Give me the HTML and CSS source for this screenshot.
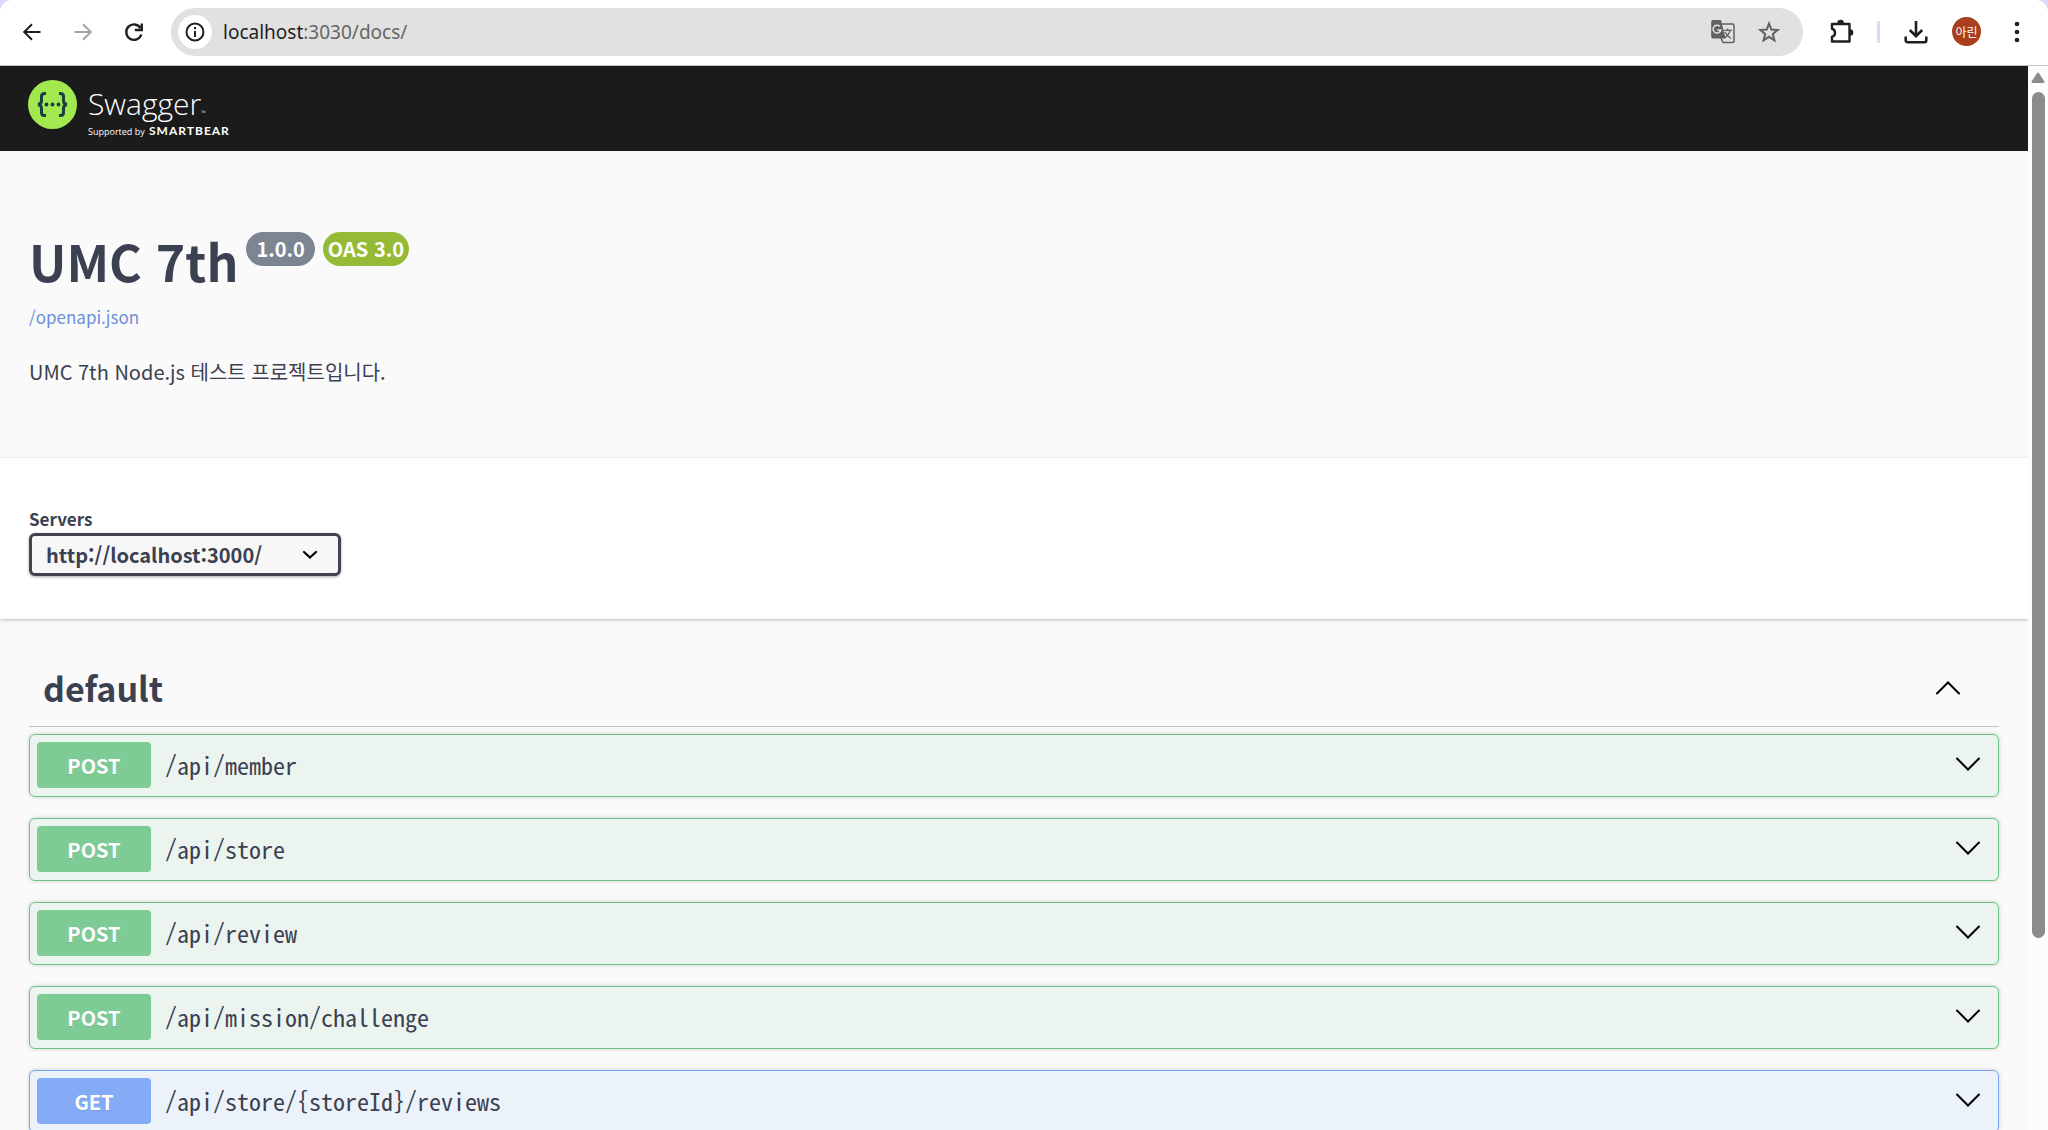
FILE: index.html
```html
<!DOCTYPE html>
<html lang="ko">
<head>
<meta charset="utf-8">
<title>Swagger UI</title>
<link rel="stylesheet" href="styles.css">
</head>
<body>
<header class="browser-bar">
  <nav class="nav-buttons" aria-label="Browser navigation">
    <button class="icon-button" aria-label="Back"><svg width="32" height="32" viewBox="0 0 32 32" fill="none" stroke="#1f1f1f" stroke-width="2"><path d="M24.500 16H8.500M16 8.200L8.200 16l7.800 7.800"/></svg></button>
    <button class="icon-button" aria-label="Forward"><svg width="32" height="32" viewBox="0 0 32 32" fill="none" stroke="#a5a5a5" stroke-width="2"><path d="M7.500 16h16M16 8.200l7.800 7.800-7.800 7.800"/></svg></button>
    <button class="icon-button" aria-label="Reload"><svg width="32" height="32" viewBox="0 0 32 32" fill="none" stroke="#1f1f1f" stroke-width="2.400"><path d="M23.300 18.500A7.700 7.700 0 1 1 22.500 12M23.800 7.500v6.500h-7"/></svg></button>
  </nav>
  <div class="address">
    <button class="site-info" aria-label="Site information"><svg width="20" height="20" viewBox="0 0 20 20" fill="none" stroke="#1f1f1f" stroke-width="2"><circle cx="10" cy="10" r="8.500"/><path d="M10 9v6M10 5v2.200"/></svg></button>
    <a class="url" href="#"><span class="host">localhost</span>:3030/docs/</a>
    <button class="icon-button" aria-label="Translate"><svg width="26" height="26" viewBox="0 0 26 26"><path d="M12 5h10.500a1.500 1.500 0 0 1 1.500 1.500V22a1.500 1.500 0 0 1-1.500 1.500H13L11 19" fill="none" stroke="#606060" stroke-width="1.500"/><path d="M3 1h8l4.500 18.500H3A1.800 1.800 0 0 1 1.200 17.700V2.800A1.800 1.800 0 0 1 3 1z" fill="#606060"/><path d="M9.800 7.400A3.900 3.900 0 1 0 10.800 11H7.200" fill="none" stroke="#e1e1e1" stroke-width="1.600"/><path d="M13.500 11.300H22M17.700 9.500v1.800M20 11.500c-.5 3-3.500 6.500-6 7.500M15 13c1 2.500 3.500 5 6 6.500" fill="none" stroke="#606060" stroke-width="1.300"/></svg></button>
    <button class="icon-button" aria-label="Bookmark"><svg width="24" height="24" viewBox="0 0 24 24" fill="none" stroke="#606060" stroke-width="2"><path d="M12 3.500l2.300 6 6.400.5-4.900 4 1.600 6.300L12 16.800l-5.400 3.500L8.200 14l-4.900-4 6.400-.5z"/></svg></button>
  </div>
  <div class="tools">
    <button class="icon-button" aria-label="Extensions"><svg width="28" height="28" viewBox="0 0 28 28"><path d="M5 6h17.500v17.500H5v-4.700c4-.8 4-7.300 0-8.100z" fill="none" stroke="#1f1f1f" stroke-width="2.400" stroke-linejoin="round"/><path d="M10.300 5a3.300 3.300 0 0 1 6.600 0zM23 11.200a3.300 3.300 0 0 1 0 6.600z" fill="#1f1f1f"/></svg></button>
    <span class="divider"></span>
    <button class="icon-button" aria-label="Downloads"><svg width="28" height="28" viewBox="0 0 28 28" fill="none" stroke="#1f1f1f" stroke-width="2.600"><path d="M14 3v15M7.800 12l6.200 6.200 6.200-6.200M3.700 18.500v3.700a2 2 0 0 0 2 2h16.600a2 2 0 0 0 2-2v-3.700"/></svg></button>
    <button class="avatar" aria-label="Profile">아린</button>
    <button class="icon-button" aria-label="Menu"><svg width="28" height="28" viewBox="0 0 28 28" fill="#1f1f1f"><circle cx="14" cy="6" r="2.300"/><circle cx="14" cy="14" r="2.300"/><circle cx="14" cy="22" r="2.300"/></svg></button>
  </div>
</header>
<div class="viewport">
  <main class="page">
    <div class="topbar">
      <a class="logo" href="#" aria-label="Swagger">
        <svg width="49" height="49" viewBox="0 0 49 49"><circle cx="24.500" cy="24.500" r="24.500" fill="#a1e94f"/><g fill="none" stroke="#1b3c42" stroke-width="3"><path d="M18 13.500h-1.500c-2 0-3 1-3 3v4c0 2.500-1 3.700-3.500 4 2.500.3 3.500 1.500 3.500 4v4c0 2 1 3 3 3H18M31 13.500h1.500c2 0 3 1 3 3v4c0 2.500 1 3.700 3.500 4-2.500.3-3.500 1.500-3.500 4v4c0 2-1 3-3 3H31"/></g><g fill="#1b3c42"><circle cx="18.500" cy="24.500" r="1.900"/><circle cx="24.500" cy="24.500" r="1.900"/><circle cx="30.500" cy="24.500" r="1.900"/></g></svg>
        <span class="wordmark">
          <span class="brand">Swagger<span class="tm">™</span></span>
          <span class="support">Supported by <b>SMARTBEAR</b></span>
        </span>
      </a>
    </div>
    <section class="info">
      <div class="title-row">
        <h1>UMC 7th</h1>
        <span class="badge version">1.0.0</span>
        <span class="badge oas">OAS 3.0</span>
      </div>
      <a class="spec-link" href="#">/openapi.json</a>
      <p class="description">UMC 7th Node.js 테스트 프로젝트입니다.</p>
    </section>
    <section class="servers">
      <label for="server">Servers</label>
      <div class="select-box">
        <select id="server"><option>http://localhost:3000/</option></select>
        <svg class="select-arrow" width="16" height="10" viewBox="0 0 16 10" fill="none" stroke="#000" stroke-width="2.200" stroke-linecap="round"><path d="M2 2l6 5.500L14 2"/></svg>
      </div>
    </section>
    <section class="operations">
      <div class="tag">
        <h2>default</h2>
        <button class="icon-button" aria-label="Collapse"><svg width="26" height="16" viewBox="0 0 26 16" class="chevron"><path d="M2 13.500L13 2.500l11 11"/></svg></button>
      </div>
      <ul class="list">
        <li class="op post"><button class="method">POST</button><a class="path" href="#">/api/member</a><button class="icon-button" aria-label="Expand"><svg width="26" height="16" viewBox="0 0 26 16" class="chevron"><path d="M2 1.500l11 11 11-11"/></svg></button></li>
        <li class="op post"><button class="method">POST</button><a class="path" href="#">/api/store</a><button class="icon-button" aria-label="Expand"><svg width="26" height="16" viewBox="0 0 26 16" class="chevron"><path d="M2 1.500l11 11 11-11"/></svg></button></li>
        <li class="op post"><button class="method">POST</button><a class="path" href="#">/api/review</a><button class="icon-button" aria-label="Expand"><svg width="26" height="16" viewBox="0 0 26 16" class="chevron"><path d="M2 1.500l11 11 11-11"/></svg></button></li>
        <li class="op post"><button class="method">POST</button><a class="path" href="#">/api/mission/challenge</a><button class="icon-button" aria-label="Expand"><svg width="26" height="16" viewBox="0 0 26 16" class="chevron"><path d="M2 1.500l11 11 11-11"/></svg></button></li>
        <li class="op get"><button class="method">GET</button><a class="path" href="#">/api/store/{storeId}/reviews</a><button class="icon-button" aria-label="Expand"><svg width="26" height="16" viewBox="0 0 26 16" class="chevron"><path d="M2 1.500l11 11 11-11"/></svg></button></li>
      </ul>
    </section>
  </main>
  <div class="scrollbar" aria-hidden="true">
    <svg width="14" height="12" viewBox="0 0 14 12" fill="#8b8b8b"><path d="M7 1.500L12.500 10h-11z" stroke="#8b8b8b" stroke-width="2" stroke-linejoin="round"/></svg>
    <div class="thumb"></div>
  </div>
</div>
</body>
</html>
```
FILE: styles.css
```css
* {
  box-sizing: border-box;
}

body {
  margin: 0;
  height: 100vh;
  display: flex;
  flex-direction: column;
  overflow: hidden;
  background: #dcd9fb;
  color: #3b4151;
  font-family: "Noto Sans CJK KR", sans-serif;
}

button {
  padding: 0;
  border: 0;
  background: none;
  font-family: inherit;
}

a {
  color: inherit;
  text-decoration: none;
}

svg {
  display: block;
}

.icon-button {
  display: flex;
}

/* Browser bar */
.browser-bar {
  display: flex;
  align-items: center;
  flex: none;
  height: 66px;
  padding: 0 17px 2px 16px;
  background: #fff;
  border-bottom: 1px solid #c4c4c4;
  border-radius: 12px 12px 0 0;
}

.nav-buttons {
  display: flex;
  gap: 19px;
  margin-right: 21px;
}

.address {
  display: flex;
  flex: 1;
  align-items: center;
  height: 48px;
  padding: 0 22px 0 7px;
  border-radius: 24px;
  background: #e1e1e1;
  gap: 21px;
}

.site-info {
  display: flex;
  align-items: center;
  justify-content: center;
  width: 34px;
  height: 34px;
  border-radius: 50%;
  background: #fff;
}

.url {
  flex: 1;
  margin-left: -10px;
  font: 19px "Noto Sans", sans-serif;
  color: #666;
}

.host {
  color: #1f1f1f;
}

.tools {
  display: flex;
  align-items: center;
  margin-left: 24px;
  gap: 22px;
}

.divider {
  width: 3px;
  height: 22px;
  background: #dcd9fb;
}

.avatar {
  width: 29px;
  height: 29px;
  border-radius: 50%;
  background: #a93f1e;
  color: #fff;
  font-size: 12px;
  line-height: 29px;
}

/* Page and scrollbar */
.viewport {
  display: flex;
  flex: 1;
  min-height: 0;
}

.page {
  flex: 1;
  min-width: 0;
  overflow: hidden;
  background: #fafafa;
}

.scrollbar {
  display: flex;
  flex-direction: column;
  align-items: center;
  width: 20px;
  padding-top: 6px;
  gap: 8px;
  background: #fcfcfc;
}

.thumb {
  width: 13px;
  height: 80%;
  border-radius: 7px;
  background: #8b8b8b;
}

/* Top bar */
.topbar {
  height: 85px;
  padding: 14px 28px;
  background: #1b1b1b;
}

.logo {
  display: flex;
  gap: 11px;
  color: #fff;
}

.wordmark {
  display: flex;
  flex-direction: column;
  font-family: "Open Sans", sans-serif;
}

.brand {
  height: 44px;
  font-size: 30px;
  font-weight: 300;
  line-height: 48px;
}

.tm {
  font-size: 6px;
}

.support {
  height: 14px;
  font-size: 9px;
  line-height: 14px;
}

.support b {
  margin-left: 2px;
  font: 700 12px/14px Lato, sans-serif;
  letter-spacing: 1px;
}

/* API information */
.info {
  padding: 72px 29px 71px;
}

.title-row {
  display: flex;
  gap: 8px;
}

h1 {
  margin: 0;
  font-size: 50px;
  line-height: 74px;
}

.badge {
  height: 34px;
  margin-top: 9px;
  border-radius: 17px;
  color: #fff;
  font-size: 20px;
  font-weight: 700;
  line-height: 34px;
}

.version {
  padding: 0 10px;
  background: #7d8492;
}

.oas {
  padding: 0 5px;
  background: #95bb36;
}

.spec-link {
  display: block;
  margin-top: 7px;
  color: #6b8fd9;
  font-size: 17px;
  line-height: 26px;
}

.description {
  margin: 27px 0 0;
  font-size: 20px;
  line-height: 30px;
}

/* Servers */
.servers {
  padding: 47px 29px 43px;
  background: #fff;
  box-shadow: 0 1px 3px rgba(0, 0, 0, 0.25);
}

.servers label {
  display: block;
  font-size: 17px;
  font-weight: 700;
  line-height: 28px;
}

.select-box {
  display: grid;
  align-items: center;
  width: 312px;
}

.select-box select {
  grid-area: 1 / 1;
  width: 100%;
  height: 43px;
  padding: 0 14px;
  appearance: none;
  border: 3px solid #41444e;
  border-radius: 6px;
  background: #f7f7f7;
  box-shadow: 0 1px 3px rgba(0, 0, 0, 0.35);
  color: #3b4151;
  font: 700 20px "Noto Sans CJK KR", sans-serif;
}

.select-arrow {
  grid-area: 1 / 1;
  justify-self: end;
  margin-right: 23px;
  pointer-events: none;
}

/* Operations */
.operations {
  padding: 32px 29px;
}

.tag {
  display: flex;
  align-items: center;
  justify-content: space-between;
  height: 76px;
  padding: 0 38px 2px 14px;
  border-bottom: 1px solid #c0c3c6;
}

h2 {
  margin: 0;
  font-size: 34px;
  line-height: 52px;
}

.chevron {
  fill: none;
  stroke: #000;
  stroke-width: 2;
  stroke-linecap: round;
}

.list {
  display: flex;
  flex-direction: column;
  gap: 21px;
  margin: 7px 0 0;
  padding: 0;
  list-style: none;
}

.op {
  display: flex;
  align-items: center;
  height: 63px;
  padding: 0 17px 1px 7px;
  border: 1px solid;
  border-radius: 6px;
  box-shadow: 0 0 4px rgba(0, 0, 0, 0.19);
}

.post {
  border-color: #6fc388;
  background: #ebf4ef;
}

.get {
  border-color: #7ba5f0;
  background: #ebf2fa;
}

.method {
  width: 114px;
  height: 46px;
  border-radius: 4px;
  color: #fff;
  font-size: 20px;
  font-weight: 700;
  text-shadow: 0 1px 0 rgba(0, 0, 0, 0.1);
}

.post .method {
  background: #7ecb95;
}

.get .method {
  background: #84acf6;
}

.path {
  flex: 1;
  margin-left: 14px;
  font-family: "Noto Sans Mono CJK KR", "Liberation Mono", monospace;
  font-size: 24px;
  line-height: 36px;
}
```
